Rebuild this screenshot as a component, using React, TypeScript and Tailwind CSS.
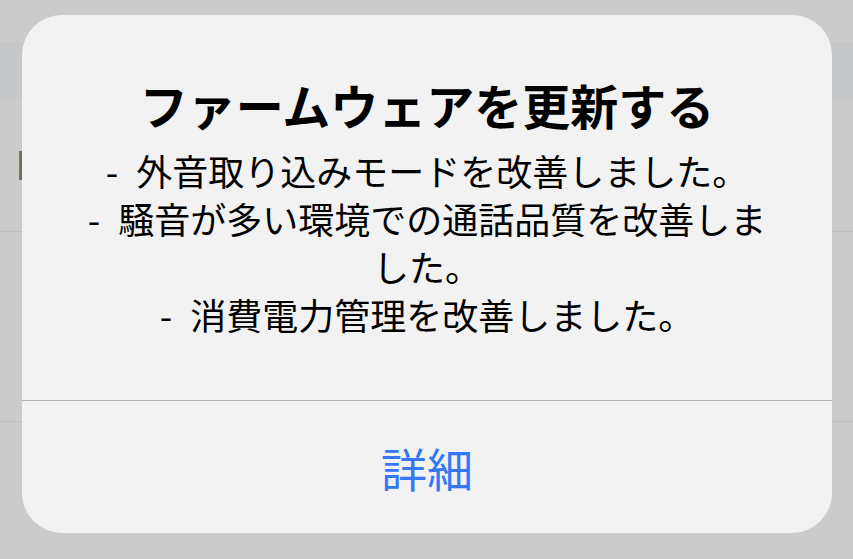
export default function App() {
  const lines = [
    "-\u2002外音取り込みモードを改善しました。",
    "-\u2002騒音が多い環境での通話品質を改善しま",
    "した。",
    "-\u2002消費電力管理を改善しました。",
  ];

  return (
    <div
      className="relative h-[559px] w-full overflow-hidden bg-[#cbcbcb]"
      style={{ fontFamily: '"Noto Sans CJK JP", "Noto Sans", sans-serif' }}
    >
      {/* underlying page, dimmed */}
      <div className="h-[42px]" />
      <div className="h-[57px] bg-[#c5c7c9]" />
      <div className="flex h-[133px] items-center border-b border-[#bdbdbd] pl-[7px] pb-[5px] text-[36px] text-[#6b6b6b]">
        ト
      </div>
      <div className="h-[190px] border-b border-[#bfbfbf]" />

      {/* alert */}
      <div className="absolute left-[22px] top-[15px] flex h-[518px] w-[810px] flex-col overflow-hidden rounded-[40px] bg-[#f2f2f2]">
        <div className="flex h-[385px] flex-col items-center pt-[61px]">
          <h1 className="text-[48px] font-bold leading-[56px] text-black">
            ファームウェアを更新する
          </h1>
          <div className="mt-[14px] flex flex-col items-center text-[36px] leading-[48px] text-black">
            {lines.map((l, i) => (
              <span key={i} className="whitespace-nowrap">
                {l}
              </span>
            ))}
          </div>
        </div>
        <div className="h-px bg-[#b3b3b3]" />
        <button className="flex flex-1 items-center justify-center text-[46px] text-[#3478f6]">
          詳細
        </button>
      </div>
    </div>
  );
}
